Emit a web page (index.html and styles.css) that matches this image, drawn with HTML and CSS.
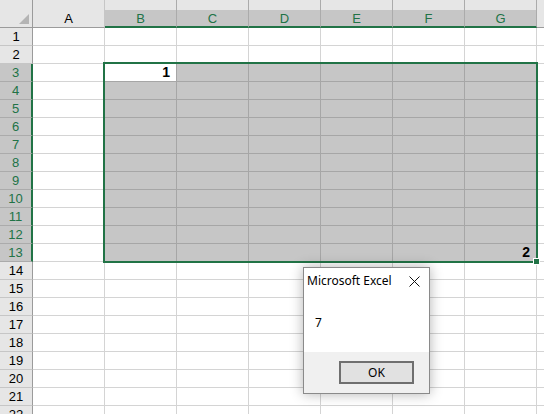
FILE: index.html
```html
<!DOCTYPE html>
<html>
<head>
<meta charset="utf-8">
<link rel="stylesheet" href="styles.css">
</head>
<body>
<div class="sheet">
  <div class="hdr">
    <div class="corner"><svg width="33" height="28" viewBox="0 0 33 28"><polygon points="29,14 29,24 19,24" fill="#b4b4b4"/></svg></div>
    <div class="ch">A</div>
    <div class="ch sel">B</div>
    <div class="ch sel">C</div>
    <div class="ch sel">D</div>
    <div class="ch sel">E</div>
    <div class="ch sel">F</div>
    <div class="ch sel">G</div>
    <div class="ch"></div>
  </div>
  <div class="row"><div class="rh">1</div><div class="c"></div><div class="c"></div><div class="c"></div><div class="c"></div><div class="c"></div><div class="c"></div><div class="c"></div><div class="c"></div></div>
  <div class="row"><div class="rh">2</div><div class="c"></div><div class="c"></div><div class="c"></div><div class="c"></div><div class="c"></div><div class="c"></div><div class="c"></div><div class="c"></div></div>
  <div class="row sel"><div class="rh">3</div><div class="c"></div><div class="c active">1</div><div class="c"></div><div class="c"></div><div class="c"></div><div class="c"></div><div class="c"></div><div class="c"></div></div>
  <div class="row sel"><div class="rh">4</div><div class="c"></div><div class="c"></div><div class="c"></div><div class="c"></div><div class="c"></div><div class="c"></div><div class="c"></div><div class="c"></div></div>
  <div class="row sel"><div class="rh">5</div><div class="c"></div><div class="c"></div><div class="c"></div><div class="c"></div><div class="c"></div><div class="c"></div><div class="c"></div><div class="c"></div></div>
  <div class="row sel"><div class="rh">6</div><div class="c"></div><div class="c"></div><div class="c"></div><div class="c"></div><div class="c"></div><div class="c"></div><div class="c"></div><div class="c"></div></div>
  <div class="row sel"><div class="rh">7</div><div class="c"></div><div class="c"></div><div class="c"></div><div class="c"></div><div class="c"></div><div class="c"></div><div class="c"></div><div class="c"></div></div>
  <div class="row sel"><div class="rh">8</div><div class="c"></div><div class="c"></div><div class="c"></div><div class="c"></div><div class="c"></div><div class="c"></div><div class="c"></div><div class="c"></div></div>
  <div class="row sel"><div class="rh">9</div><div class="c"></div><div class="c"></div><div class="c"></div><div class="c"></div><div class="c"></div><div class="c"></div><div class="c"></div><div class="c"></div></div>
  <div class="row sel"><div class="rh">10</div><div class="c"></div><div class="c"></div><div class="c"></div><div class="c"></div><div class="c"></div><div class="c"></div><div class="c"></div><div class="c"></div></div>
  <div class="row sel"><div class="rh">11</div><div class="c"></div><div class="c"></div><div class="c"></div><div class="c"></div><div class="c"></div><div class="c"></div><div class="c"></div><div class="c"></div></div>
  <div class="row sel"><div class="rh">12</div><div class="c"></div><div class="c"></div><div class="c"></div><div class="c"></div><div class="c"></div><div class="c"></div><div class="c"></div><div class="c"></div></div>
  <div class="row sel"><div class="rh">13</div><div class="c"></div><div class="c"></div><div class="c"></div><div class="c"></div><div class="c"></div><div class="c"></div><div class="c">2</div><div class="c"></div></div>
  <div class="row"><div class="rh">14</div><div class="c"></div><div class="c"></div><div class="c"></div><div class="c"></div><div class="c"></div><div class="c"></div><div class="c"></div><div class="c"></div></div>
  <div class="row"><div class="rh">15</div><div class="c"></div><div class="c"></div><div class="c"></div><div class="c"></div><div class="c"></div><div class="c"></div><div class="c"></div><div class="c"></div></div>
  <div class="row"><div class="rh">16</div><div class="c"></div><div class="c"></div><div class="c"></div><div class="c"></div><div class="c"></div><div class="c"></div><div class="c"></div><div class="c"></div></div>
  <div class="row"><div class="rh">17</div><div class="c"></div><div class="c"></div><div class="c"></div><div class="c"></div><div class="c"></div><div class="c"></div><div class="c"></div><div class="c"></div></div>
  <div class="row"><div class="rh">18</div><div class="c"></div><div class="c"></div><div class="c"></div><div class="c"></div><div class="c"></div><div class="c"></div><div class="c"></div><div class="c"></div></div>
  <div class="row"><div class="rh">19</div><div class="c"></div><div class="c"></div><div class="c"></div><div class="c"></div><div class="c"></div><div class="c"></div><div class="c"></div><div class="c"></div></div>
  <div class="row"><div class="rh">20</div><div class="c"></div><div class="c"></div><div class="c"></div><div class="c"></div><div class="c"></div><div class="c"></div><div class="c"></div><div class="c"></div></div>
  <div class="row"><div class="rh">21</div><div class="c"></div><div class="c"></div><div class="c"></div><div class="c"></div><div class="c"></div><div class="c"></div><div class="c"></div><div class="c"></div></div>
  <div class="row"><div class="rh">22</div><div class="c"></div><div class="c"></div><div class="c"></div><div class="c"></div><div class="c"></div><div class="c"></div><div class="c"></div><div class="c"></div></div>

  <div class="selbox"></div>
  <div class="handle"></div>

  <div class="dlg">
    <div class="dtitle">
      <span class="dname">Microsoft Excel</span>
      <svg class="dclose" width="11" height="11" viewBox="0 0 11 11"><path d="M0.5 0.5 L10.5 10.5 M10.5 0.5 L0.5 10.5" stroke="#111" stroke-width="1" fill="none"/></svg>
    </div>
    <div class="dmsg">7</div>
    <div class="dfoot"><div class="ok">OK</div></div>
  </div>
</div>
</body>
</html>
```
FILE: styles.css
```css
html, body {
  margin: 0;
  padding: 0;
  background: #fff;
}
.sheet {
  position: relative;
  width: 544px;
  height: 414px;
  overflow: hidden;
  font-family: "Liberation Sans", Arial, sans-serif;
  font-size: 13px;
}
.hdr, .row {
  display: flex;
  width: 620px;
}
.hdr {
  height: 28px;
}
.corner {
  width: 33px;
  height: 28px;
  box-sizing: border-box;
  background: #e6e6e6;
  border-right: 1px solid #9b9b9b;
  border-bottom: 1px solid #9b9b9b;
  flex: none;
}
.corner svg { display: block; }
.ch {
  width: 72px;
  flex: none;
  height: 28px;
  box-sizing: border-box;
  background: #e6e6e6;
  border-right: 1px solid #c6c6c6;
  border-bottom: 1px solid #9b9b9b;
  padding-top: 10px;
  line-height: 17px;
  text-align: center;
  color: #000;
}
.ch.sel {
  background: linear-gradient(#e6e6e6 0 10px, #c6c6c6 10px);
  border-right-color: #ababab;
  border-bottom: 2px solid #217346;
  color: #217346;
}
.row {
  height: 18px;
}
.rh {
  width: 33px;
  flex: none;
  box-sizing: border-box;
  background: #e6e6e6;
  border-right: 1px solid #9b9b9b;
  border-bottom: 1px solid #c6c6c6;
  text-align: center;
  line-height: 17px;
  color: #000;
}
.row.sel .rh {
  background: #c6c6c6;
  color: #217346;
  border-right: 2px solid #217346;
  border-bottom-color: #ababab;
}
.c {
  width: 72px;
  flex: none;
  box-sizing: border-box;
  border-right: 1px solid #d4d4d4;
  border-bottom: 1px solid #d4d4d4;
  background: #fff;
  text-align: right;
  padding-right: 6px;
  line-height: 17px;
  font-size: 14px;
  font-weight: bold;
  color: #000;
}
.row.sel .c:nth-child(n+3):nth-child(-n+8) {
  background: #c6c6c6;
  border-right-color: #a6a6a6;
  border-bottom-color: #a6a6a6;
}
.row.sel .c.active:nth-child(n+3) {
  background: #fff;
}
.selbox {
  position: absolute;
  left: 103px;
  top: 62px;
  width: 435px;
  height: 201px;
  box-sizing: border-box;
  border: 2px solid #217346;
}
.handle {
  position: absolute;
  left: 534px;
  top: 259px;
  width: 5px;
  height: 5px;
  background: #217346;
  box-shadow: 0 0 0 1px #fff;
}
.dlg {
  position: absolute;
  left: 303px;
  top: 267px;
  width: 127px;
  height: 127px;
  box-sizing: border-box;
  border: 1px solid #8a8a8a;
  background: #fff;
  box-shadow: 0 0 12px rgba(0, 0, 0, 0.3);
  display: flex;
  flex-direction: column;
  font-family: "Noto Sans", "Open Sans", sans-serif;
  font-size: 12px;
  color: #000;
}
.dtitle {
  height: 26px;
  display: flex;
  align-items: center;
  justify-content: space-between;
  padding: 0 9px 0 3px;
}
.dname { line-height: 16px; }
.dclose { display: block; }
.dmsg {
  flex: 1;
  padding: 21px 0 0 11px;
  line-height: 16px;
}
.dfoot {
  height: 41px;
  background: #f0f0f0;
  display: flex;
  justify-content: flex-end;
  align-items: flex-start;
  padding: 9px 15px 0 0;
  box-sizing: border-box;
}
.ok {
  width: 75px;
  height: 23px;
  box-sizing: border-box;
  border: 2px solid #6f6f6f;
  background: #e1e1e1;
  text-align: center;
  line-height: 19px;
  font-size: 12px;
}
```
